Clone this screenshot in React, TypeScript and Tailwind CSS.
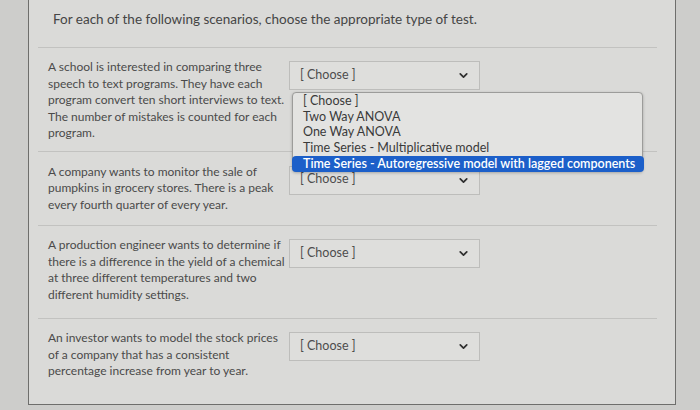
import { ChevronDown } from "lucide-react"

const rows = [
	{
		text: "A school is interested in comparing three speech to text programs. They have each program convert ten short interviews to text. The number of mistakes is counted for each program.",
		pad: "pt-[11px] pb-[9px]",
		open: true,
	},
	{
		text: "A company wants to monitor the sale of pumpkins in grocery stores. There is a peak every fourth quarter of every year.",
		pad: "pt-[12px] pb-[12px]",
	},
	{
		text: "A production engineer wants to determine if there is a difference in the yield of a chemical at three different temperatures and two different humidity settings.",
		pad: "pt-[11px] pb-[15px]",
	},
	{
		text: "An investor wants to model the stock prices of a company that has a consistent percentage increase from year to year.",
		pad: "pt-[11px] pb-[24px]",
	},
]

const options = [
	"[ Choose ]",
	"Two Way ANOVA",
	"One Way ANOVA",
	"Time Series - Multiplicative model",
]

function Select() {
	return (
		<div className="h-[29px] w-[191px] border border-[#bdbdbb] bg-[#dededc] flex items-center justify-between pl-[10px] pr-[9px] text-[12.5px] text-[#4d4d4d]">
			<span className="-mt-[1px]">[ Choose ]</span>
			<ChevronDown size={13} strokeWidth={3.2} className="text-[#2f2f2f]" />
		</div>
	)
}

export default function App() {
	return (
		<div
			className="w-[700px] h-[410px] bg-[#cdcdcb] overflow-hidden"
			style={{ fontFamily: "Lato, 'Open Sans', sans-serif" }}
		>
			<div className="ml-[28px] w-[648px] bg-[#dadad8] border-l border-r border-b border-[#6e6e6c] pl-[9px] pr-[18px]">
				<div className="h-[48px] border-b border-[#c2c2c0] pl-[15px] pt-[9px] text-[13.5px] text-[#454545]">
					For each of the following scenarios, choose the appropriate type of test.
				</div>
				{rows.map((r, i) => (
					<div
						key={i}
						className={`flex pl-[10px] ${r.pad} ${i < rows.length - 1 ? "border-b border-[#c2c2c0]" : ""}`}
					>
						<div className="w-[241px] text-[12px] leading-[16.5px] text-[#4a4a4a]">{r.text}</div>
						<div className="relative mt-[2px]">
							<Select />
							{r.open && (
								<div className="absolute left-[3px] top-[31px] z-10 w-[351px] h-[80px] rounded-[4px] border border-[#9c9c9a] bg-[#e3e3e1] shadow-[0_1px_3px_rgba(0,0,0,0.25)] text-[12.5px] leading-[15.5px] text-[#3a3a3a]">
									{options.map((o) => (
										<div key={o} className="pl-[10px]">{o}</div>
									))}
									<div className="mt-[1px] -ml-[1px] w-[352px] rounded-[4px] bg-[#1c5fc9] pl-[11px] text-white font-semibold leading-[16px]">
										Time Series - Autoregressive model with lagged components
									</div>
								</div>
							)}
						</div>
					</div>
				))}
			</div>
		</div>
	)
}
